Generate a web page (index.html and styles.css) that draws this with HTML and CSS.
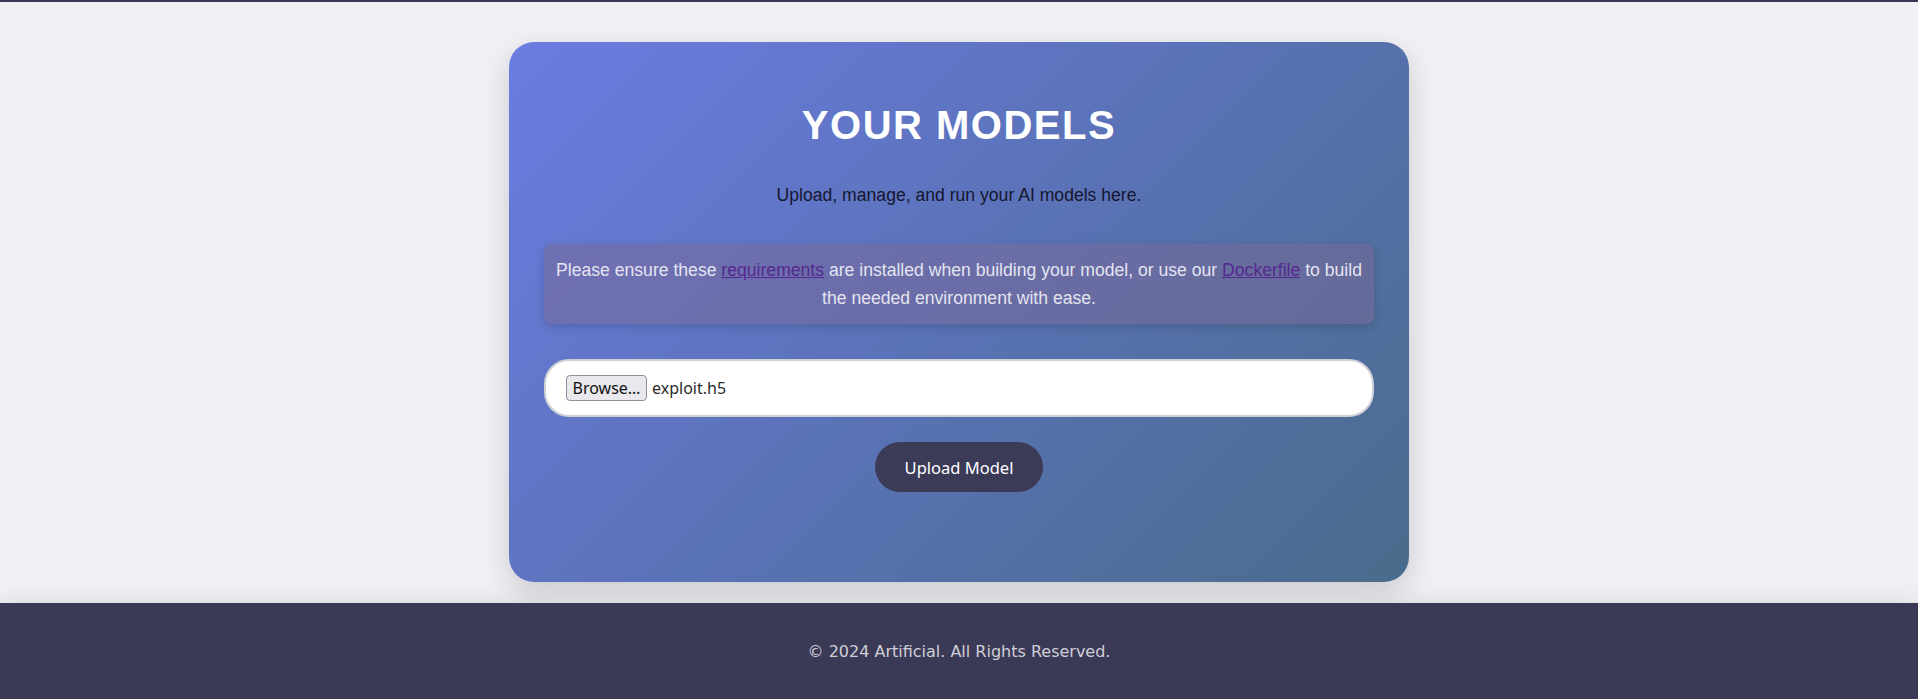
FILE: index.html
```html
<!DOCTYPE html>
<html lang="en">
<head>
<meta charset="utf-8">
<title>Your Models</title>
<link rel="stylesheet" href="styles.css">
</head>
<body>
<header class="topbar"></header>
<main class="main">
  <section class="card">
    <h1 class="title">YOUR MODELS</h1>
    <p class="subtitle">Upload, manage, and run your AI models here.</p>
    <div class="notice">
      Please ensure these <a href="#" class="link">requirements</a> are installed when building your model, or use our <a href="#" class="link">Dockerfile</a> to build the needed environment with ease.
    </div>
    <form class="upload-form">
      <div class="file-input">
        <span class="browse">Browse…</span>
        <span class="file-name">exploit.h5</span>
      </div>
      <button type="button" class="upload-btn">Upload Model</button>
    </form>
  </section>
</main>
<footer class="footer">
  <p class="footer-text">© 2024 Artificial. All Rights Reserved.</p>
</footer>
</body>
</html>
```
FILE: styles.css
```css
html, body {
  margin: 0;
  padding: 0;
}
body {
  background: #f0f0f5;
  font-family: "Liberation Sans", Arial, sans-serif;
  min-height: 100vh;
  display: flex;
  flex-direction: column;
}
.topbar {
  height: 2px;
  background: #3b3a56;
}
.main {
  display: flex;
  justify-content: center;
  padding: 40px 0 21px;
}
.card {
  width: 900px;
  box-sizing: border-box;
  padding: 60px 35px 90px;
  border-radius: 25px;
  background: linear-gradient(135deg, #6b7ce2 0%, #5a72b6 50%, #496c8b 100%);
  box-shadow: 0 10px 30px rgba(0, 0, 0, 0.16);
  display: flex;
  flex-direction: column;
  align-items: stretch;
  text-align: center;
}
.title {
  margin: 0;
  color: #ffffff;
  font-size: 40px;
  font-weight: 700;
  letter-spacing: 1.5px;
  line-height: 46px;
}
.subtitle {
  margin: 37px 0 39px;
  color: #16162e;
  font-size: 17.6px;
  line-height: 20px;
}
.notice {
  padding: 12px 12px;
  border-radius: 8px;
  background: rgba(122, 104, 150, 0.5);
  box-shadow: 0 3px 10px rgba(0, 0, 0, 0.16);
  color: #e4e4f0;
  font-size: 17.6px;
  line-height: 28px;
}
.link {
  color: #55288f;
  text-decoration: underline;
}
.upload-form {
  margin-top: 35px;
  display: flex;
  flex-direction: column;
  align-items: center;
  gap: 25px;
}
.file-input {
  align-self: stretch;
  box-sizing: border-box;
  height: 58px;
  padding: 14px 20px;
  background: #ffffff;
  border: 2px solid #cfcfd6;
  border-radius: 25px;
  display: flex;
  align-items: center;
  gap: 5px;
  font-family: "Noto Sans", "DejaVu Sans", sans-serif;
  font-size: 16px;
  color: #222;
}
.browse {
  box-sizing: border-box;
  height: 26px;
  width: 81px;
  display: flex;
  align-items: center;
  justify-content: center;
  background: #e9e9ed;
  border: 1px solid #8f8f9d;
  border-radius: 4px;
  color: #111;
  font-size: 16px;
}
.file-name {
  color: #2b2b2b;
}
.upload-btn {
  height: 50px;
  padding: 0 30px;
  border: none;
  border-radius: 25px;
  background: #3b3a57;
  color: #ffffff;
  font-family: "Noto Sans", "DejaVu Sans", sans-serif;
  font-size: 16.5px;
  cursor: pointer;
}
.footer {
  background: #3b3a56;
  box-shadow: 0 -4px 20px rgba(0, 0, 0, 0.08);
  padding: 39px 0;
  text-align: center;
  flex: 1;
}
.footer-text {
  margin: 0;
  color: #cfcfd8;
  font-family: "DejaVu Sans", sans-serif;
  font-size: 16px;
  line-height: 19px;
}
```
